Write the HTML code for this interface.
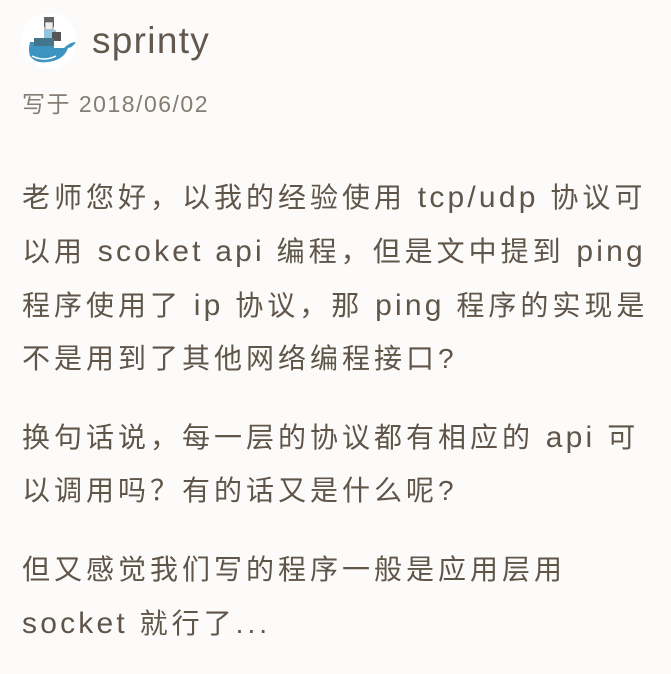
<!DOCTYPE html>
<html><head><meta charset="utf-8"><style>
html,body{margin:0;padding:0;background:#fdfbfa;width:671px;height:674px;overflow:hidden}
body{font-family:"Liberation Sans","Noto Sans CJK SC",sans-serif;color:#5f5549;position:relative}
.name{position:absolute;left:92px;top:19px;font-size:37px;letter-spacing:1.3px;color:#62584d;line-height:44px}
.date{position:absolute;left:22px;top:91px;font-size:23px;color:#857c72;letter-spacing:1.5px;line-height:26px}
.l{position:absolute;left:22px;font-size:28px;letter-spacing:4px;white-space:nowrap;line-height:40px}
.e{font-size:30px;letter-spacing:3.2px}
</style></head><body>
<svg style="position:absolute;left:20px;top:12px" width="58" height="58" viewBox="0 0 58 58">
<circle cx="29" cy="29" r="28" fill="#fff"/>
<rect x="24" y="5" width="10" height="10" fill="#666"/>
<rect x="25" y="10" width="8" height="8" fill="#eee" stroke="#555" stroke-width="0.6"/>
<rect x="24" y="18" width="12" height="10" fill="#8fc6de"/>
<rect x="32" y="20" width="9" height="9" fill="#555"/>
<path d="M10 30 L34 30 L34 36 L44 36 Q50 30 56 30 Q52 36 48 36 Q44 48 28 50 Q16 52 10 44 Q8 38 10 30Z" fill="#3e94c0"/>
<rect x="14" y="26" width="20" height="8" fill="#45758a"/>
<path d="M12 44 Q24 50 36 44" stroke="#fff" stroke-width="1.5" fill="none"/>
</svg>
<div class="name">sprinty</div>
<div class="date">写于 2018/06/02</div>
<div class="l" style="top:178px">老师您好，以我的经验使用 <span class="e">tcp/udp</span> 协议可</div>
<div class="l" style="top:232px">以用 <span class="e">scoket api</span> 编程，但是文中提到 <span class="e">ping</span></div>
<div class="l" style="top:286px">程序使用了 <span class="e">ip</span> 协议，那 <span class="e">ping</span> 程序的实现是</div>
<div class="l" style="top:339px">不是用到了其他网络编程接口?</div>
<div class="l" style="top:418px">换句话说，每一层的协议都有相应的 <span class="e">api</span> 可</div>
<div class="l" style="top:471px">以调用吗？有的话又是什么呢?</div>
<div class="l" style="top:550px">但又感觉我们写的程序一般是应用层用</div>
<div class="l" style="top:604px"><span class="e">socket</span> 就行了...</div>
</body></html>
